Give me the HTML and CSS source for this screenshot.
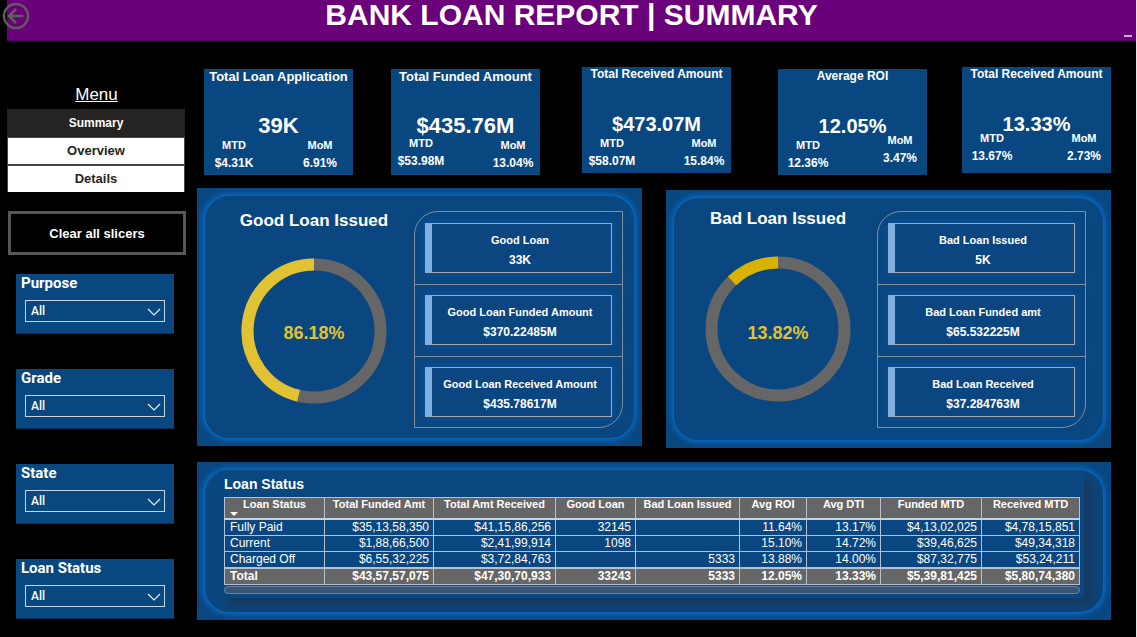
FILE: index.html
```
<!DOCTYPE html>
<html lang="en">
<head>
<meta charset="utf-8">
<title>Bank Loan Report | Summary</title>
<link rel="stylesheet" href="styles.css">
</head>
<body>
<header class="topbar">
  <button class="back" type="button" aria-label="Back">
    <svg viewBox="0 0 28 28" width="28" height="28" fill="none" stroke="#605e5c">
      <circle cx="14" cy="14" r="12" stroke-width="2.4"/>
      <path d="M21.5 14H7M14 7L7 14l7 7" stroke-width="2.6"/>
    </svg>
  </button>
  <h1 class="topbar-title">BANK LOAN REPORT | SUMMARY</h1>
  <span class="topbar-dash"></span>
</header>

<div class="layout">
  <aside class="sidebar">
    <h2 class="menu-title">Menu</h2>
    <nav class="menu">
      <a class="menu-item menu-item--active" href="#summary">Summary</a>
      <a class="menu-item" href="#overview">Overview</a>
      <a class="menu-item" href="#details">Details</a>
    </nav>
    <button class="clear" type="button">Clear all slicers</button>
    <div class="slicers">
      <div class="slicer">
        <label class="slicer-label" for="purpose">Purpose</label>
        <div class="slicer-field">
          <select class="slicer-select" id="purpose"><option>All</option></select>
          <svg class="chevron" viewBox="0 0 14 8" width="14" height="8"><path d="M1 1l6 6 6-6"/></svg>
        </div>
      </div>
      <div class="slicer">
        <label class="slicer-label" for="grade">Grade</label>
        <div class="slicer-field">
          <select class="slicer-select" id="grade"><option>All</option></select>
          <svg class="chevron" viewBox="0 0 14 8" width="14" height="8"><path d="M1 1l6 6 6-6"/></svg>
        </div>
      </div>
      <div class="slicer">
        <label class="slicer-label" for="state">State</label>
        <div class="slicer-field">
          <select class="slicer-select" id="state"><option>All</option></select>
          <svg class="chevron" viewBox="0 0 14 8" width="14" height="8"><path d="M1 1l6 6 6-6"/></svg>
        </div>
      </div>
      <div class="slicer">
        <label class="slicer-label" for="status">Loan Status</label>
        <div class="slicer-field">
          <select class="slicer-select" id="status"><option>All</option></select>
          <svg class="chevron" viewBox="0 0 14 8" width="14" height="8"><path d="M1 1l6 6 6-6"/></svg>
        </div>
      </div>
    </div>
  </aside>

  <main class="content">
    <section class="kpis">
      <article class="kpi kpi--low">
        <h2 class="kpi-title">Total Loan Application</h2>
        <p class="kpi-value">39K</p>
        <div class="stats">
          <div class="stat stat--low"><span class="stat-label">MTD</span><span class="stat-value">$4.31K</span></div>
          <div class="stat stat--low stat--inner"><span class="stat-label">MoM</span><span class="stat-value">6.91%</span></div>
        </div>
      </article>
      <article class="kpi kpi--low">
        <h2 class="kpi-title">Total Funded Amount</h2>
        <p class="kpi-value">$435.76M</p>
        <div class="stats">
          <div class="stat stat--mid"><span class="stat-label">MTD</span><span class="stat-value">$53.98M</span></div>
          <div class="stat stat--low"><span class="stat-label">MoM</span><span class="stat-value">13.04%</span></div>
        </div>
      </article>
      <article class="kpi kpi--small">
        <h2 class="kpi-title">Total Received Amount</h2>
        <p class="kpi-value">$473.07M</p>
        <div class="stats">
          <div class="stat stat--low"><span class="stat-label">MTD</span><span class="stat-value">$58.07M</span></div>
          <div class="stat stat--low"><span class="stat-label">MoM</span><span class="stat-value">15.84%</span></div>
        </div>
      </article>
      <article class="kpi kpi--low kpi--small">
        <h2 class="kpi-title">Average ROI</h2>
        <p class="kpi-value">12.05%</p>
        <div class="stats">
          <div class="stat stat--low"><span class="stat-label">MTD</span><span class="stat-value">12.36%</span></div>
          <div class="stat"><span class="stat-label">MoM</span><span class="stat-value">3.47%</span></div>
        </div>
      </article>
      <article class="kpi kpi--small">
        <h2 class="kpi-title">Total Received Amount</h2>
        <p class="kpi-value">13.33%</p>
        <div class="stats">
          <div class="stat"><span class="stat-label">MTD</span><span class="stat-value">13.67%</span></div>
          <div class="stat"><span class="stat-label">MoM</span><span class="stat-value">2.73%</span></div>
        </div>
      </article>
    </section>

    <section class="issued">
      <article class="panel">
        <div class="panel-inner issued-body">
          <div class="gauge">
            <h2 class="gauge-title">Good Loan Issued</h2>
            <svg class="donut" viewBox="0 0 146 146" width="146" height="146" fill="none" stroke-width="12">
              <circle cx="73" cy="73" r="66.5" stroke="#666"/>
              <path d="M73 6.500A66.500 66.500 0 0 0 57.590 137.690" stroke="#e1c233"/>
              <text class="donut-text" x="73" y="81">86.18%</text>
            </svg>
          </div>
          <ul class="cards">
            <li class="cards-row"><div class="card"><span class="card-label">Good Loan</span><span class="card-value">33K</span></div></li>
            <li class="cards-row"><div class="card"><span class="card-label">Good Loan Funded Amount</span><span class="card-value">$370.22485M</span></div></li>
            <li class="cards-row"><div class="card"><span class="card-label">Good Loan Received Amount</span><span class="card-value">$435.78617M</span></div></li>
          </ul>
        </div>
      </article>
      <article class="panel panel--low">
        <div class="panel-inner issued-body issued-body--high">
          <div class="gauge">
            <h2 class="gauge-title">Bad Loan Issued</h2>
            <svg class="donut" viewBox="0 0 146 146" width="146" height="146" fill="none" stroke-width="12">
              <circle cx="73" cy="73" r="66.5" stroke="#666"/>
              <path d="M73 6.500A66.500 66.500 0 0 0 27.060 24.920" stroke="#d9b300"/>
              <text class="donut-text" x="73" y="83">13.82%</text>
            </svg>
          </div>
          <ul class="cards">
            <li class="cards-row"><div class="card"><span class="card-label">Bad Loan Issued</span><span class="card-value">5K</span></div></li>
            <li class="cards-row"><div class="card"><span class="card-label">Bad Loan Funded amt</span><span class="card-value">$65.532225M</span></div></li>
            <li class="cards-row"><div class="card"><span class="card-label">Bad Loan Received</span><span class="card-value">$37.284763M</span></div></li>
          </ul>
        </div>
      </article>
    </section>

    <section class="panel">
      <div class="panel-inner">
        <div class="report">
          <h2 class="report-title">Loan Status</h2>
          <table class="grid">
            <colgroup>
              <col class="w-status"><col class="w-funded"><col class="w-received"><col class="w-good"><col class="w-bad"><col class="w-roi"><col class="w-dti"><col class="w-fmtd"><col class="w-rmtd">
            </colgroup>
            <thead>
              <tr><th class="sorted">Loan Status</th><th>Total Funded Amt</th><th>Total Amt Received</th><th>Good Loan</th><th>Bad Loan Issued</th><th>Avg ROI</th><th>Avg DTI</th><th>Funded MTD</th><th>Received MTD</th></tr>
            </thead>
            <tbody>
              <tr><td>Fully Paid</td><td>$35,13,58,350</td><td>$41,15,86,256</td><td>32145</td><td></td><td>11.64%</td><td>13.17%</td><td>$4,13,02,025</td><td>$4,78,15,851</td></tr>
              <tr><td>Current</td><td>$1,88,66,500</td><td>$2,41,99,914</td><td>1098</td><td></td><td>15.10%</td><td>14.72%</td><td>$39,46,625</td><td>$49,34,318</td></tr>
              <tr><td>Charged Off</td><td>$6,55,32,225</td><td>$3,72,84,763</td><td></td><td>5333</td><td>13.88%</td><td>14.00%</td><td>$87,32,775</td><td>$53,24,211</td></tr>
            </tbody>
            <tfoot>
              <tr><td>Total</td><td>$43,57,57,075</td><td>$47,30,70,933</td><td>33243</td><td>5333</td><td>12.05%</td><td>13.33%</td><td>$5,39,81,425</td><td>$5,80,74,380</td></tr>
            </tfoot>
          </table>
          <div class="scrollbar"></div>
        </div>
      </div>
    </section>
  </main>
</div>
</body>
</html>
```
FILE: styles.css
```
* { box-sizing: border-box; }

body {
  margin: 0;
  min-height: 100vh;
  background: #000;
  border-right: 1px solid #e6e6e6;
  color: #fff;
  font-family: "Liberation Sans", Arial, sans-serif;
}

h1, h2, p, ul { margin: 0; padding: 0; }
ul { list-style: none; }

.topbar {
  position: relative;
  margin-left: 7px;
  height: 41px;
  background: #6b007b;
  border-bottom: 1px solid #55006a;
  text-align: center;
}
.topbar-title { font-size: 30px; line-height: 30px; }
.back {
  position: absolute;
  left: -5px;
  top: 2px;
  padding: 0;
  border: 0;
  background: none;
  line-height: 0;
}
.topbar-dash {
  position: absolute;
  right: 4px;
  bottom: 3px;
  width: 8px;
  height: 2px;
  background: #c4b4c8;
}

.layout {
  display: grid;
  grid-template-columns: 197px 1fr;
  padding-right: 25px;
}

/* Sidebar */
.sidebar { padding: 44px 11px 0 7px; }
.menu-title {
  font-size: 17px;
  line-height: 20px;
  font-weight: 400;
  text-align: center;
  text-decoration: underline;
  margin-bottom: 4px;
}
.menu {
  display: grid;
  gap: 2px;
  padding: 0 1px;
  background: #484644;
  margin-right: 1px;
}
.menu-item {
  background: #fff;
  color: #252423;
  font-size: 13px;
  font-weight: 700;
  line-height: 26px;
  text-align: center;
  text-decoration: none;
}
.menu-item--active {
  margin: 0 -1px -1px;
  background: #252423;
  color: #fff;
  font-size: 12px;
  line-height: 28px;
}
.clear {
  display: block;
  width: calc(100% - 1px);
  height: 44px;
  margin: 19px 0 19px 1px;
  border: 3px solid #595755;
  background: #000;
  color: #fff;
  font: 700 13px "Liberation Sans", Arial, sans-serif;
}
.slicers {
  display: grid;
  gap: 35px;
  padding: 0 12px 0 9px;
}
.slicer {
  background: #094780;
  padding: 0 9px 11px;
  border-bottom: 1px solid #06305a;
}
.slicer-label {
  display: block;
  margin: 0 -4px;
  padding-bottom: 8px;
  font: 700 15px/18px Roboto, sans-serif;
}
.slicer-field { position: relative; }
.slicer-select {
  display: block;
  appearance: none;
  width: 100%;
  height: 22px;
  padding: 0 5px;
  border: 1px solid #c8d4e0;
  border-radius: 0;
  background: transparent;
  color: #fff;
  font: 500 12px Roboto, sans-serif;
}
.chevron {
  position: absolute;
  right: 4px;
  top: 8px;
  fill: none;
  stroke: #e8eef4;
  stroke-width: 1.2;
  pointer-events: none;
}

/* Headline figures */
.content { padding-top: 26px; }
.kpis {
  display: grid;
  grid-template-columns: 149fr 38fr 149fr 42fr 149fr 47fr 149fr 35fr 149fr;
  align-items: start;
  height: 121px;
  padding-left: 7px;
}
.kpi {
  min-height: 106px;
  background: #094780;
  text-align: center;
}
.kpi:nth-child(2) { grid-column: 3; }
.kpi:nth-child(3) { grid-column: 5; }
.kpi:nth-child(4) { grid-column: 7; }
.kpi:nth-child(5) { grid-column: 9; }
.kpi--low { margin-top: 2px; }
.kpi-title {
  height: 49px;
  font-size: 13px;
  line-height: 16px;
  white-space: nowrap;
}
.kpi-value { font-size: 22px; line-height: 16px; height: 16px; font-weight: 700; }
.kpi--small .kpi-title { font-size: 12px; line-height: 14px; }
.kpi--small .kpi-value { font-size: 20px; line-height: 16px; }
.stats { display: flex; justify-content: space-between; }
.stat {
  display: grid;
  width: 60px;
  gap: 5px;
  align-content: start;
  font-weight: 700;
}
.stat:last-child { width: 54px; }
.stat--mid { padding-top: 3px; }
.stat--low { padding-top: 5px; }
.stat--inner { margin-right: 6px; }
.stat-label { font-size: 11px; line-height: 12px; }
.stat-value { font-size: 12px; line-height: 14px; }

/* Panels with a lit inner frame */
.panel {
  background: #094780;
  padding: 8px;
  overflow: hidden;
}
.panel--low { margin: 2px 0 -2px; }
.panel-inner {
  border-radius: 24px;
  background: #0a4780;
  box-shadow: 0 0 7px 1px #0a7ce4;
  overflow: hidden;
}

.issued {
  display: grid;
  grid-template-columns: 1fr 1fr;
  gap: 24px;
  margin-bottom: 16px;
}
.issued-body {
  display: grid;
  grid-template-columns: 1fr 209px;
  padding: 15px 11px 10px 9px;
}
.issued-body--high { padding: 13px 17px 12px 5px; }
.gauge {
  text-align: center;
}
.gauge-title {
  font-size: 17px;
  line-height: 20px;
  margin-bottom: 27px;
}
.issued-body--high .gauge-title { line-height: 16px; margin-bottom: 29px; }
.donut { display: block; margin: 0 auto; }
.donut-text {
  fill: #e1c233;
  stroke: none;
  font-size: 18px;
  font-weight: 700;
  text-anchor: middle;
}
.cards {
  border: 1px solid #7f90a4;
  border-radius: 24px 0 24px 0;
}
.cards-row { padding: 11px 10px; }
.cards-row + .cards-row { border-top: 1px solid #7f90a4; padding-top: 10px; }
.cards-row:last-child { padding-bottom: 10px; }
.card {
  display: grid;
  gap: 6px;
  height: 50px;
  padding: 9px 3px 0 0;
  border: 1px solid #a3a9b0;
  border-left: 7px solid #80b0e0;
  background: #0c4680;
  box-shadow: 0 0 10px rgba(10, 90, 176, 0.6);
  font-weight: 700;
  text-align: center;
  align-content: start;
}
.card-label { font-size: 11px; line-height: 14px; white-space: nowrap; }
.card-value { font-size: 12px; line-height: 14px; }

/* Loan status table */
.report {
  margin: 0 19px 14px 12px;
  padding: 6px 4px 4px 7px;
  background: #0a4780;
  box-shadow: 10px 10px 10px #173a62;
}
.report-title { font-size: 14px; line-height: 16px; margin-bottom: 5px; }
.grid {
  width: 100%;
  table-layout: fixed;
  border-collapse: collapse;
  font-size: 12px;
  line-height: 15px;
}
.w-status { width: 100px; }
.w-funded { width: 109px; }
.w-received { width: 122px; }
.w-good { width: 80px; }
.w-bad { width: 104px; }
.w-roi { width: 67px; }
.w-dti { width: 74px; }
.w-fmtd { width: 101px; }
.w-rmtd { width: 98px; }
.grid th, .grid td { border: 1px solid #b4c2d0; white-space: nowrap; }
.grid th {
  position: relative;
  height: 21px;
  padding: 0 0 7px;
  background: #666;
  border-bottom: 2px solid #c8d0d8;
  font-size: 11px;
  line-height: 13px;
}
.sorted::after {
  content: "";
  position: absolute;
  left: 5px;
  bottom: 2px;
  border: 4px solid transparent;
  border-top: 4px solid #fff;
  border-bottom: 0;
}
.grid td { padding: 0 4px 0 5px; text-align: right; }
.grid td:first-child { text-align: left; }
.grid tfoot td {
  background: #666;
  border-top: 2px solid #b4c2d0;
  font-weight: 700;
}
.scrollbar {
  height: 8px;
  margin-top: 1px;
  border: 1px solid #6485a8;
  border-radius: 4px;
  background: #3a5573;
}
```
